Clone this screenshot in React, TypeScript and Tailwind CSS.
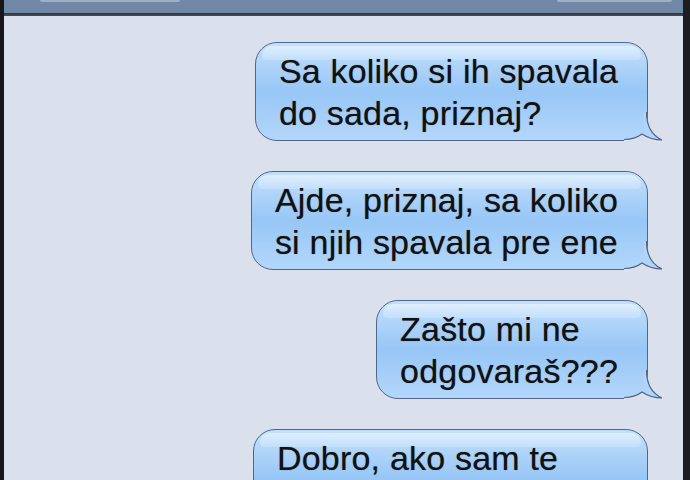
const messages: { lines: string[]; wide?: boolean }[] = [
  { lines: ["Sa koliko si ih spavala", "do sada, priznaj?"] },
  { lines: ["Ajde, priznaj, sa koliko", "si njih spavala pre ene"] },
  { lines: ["Zašto mi ne", "odgovaraš???"] },
  { lines: ["Dobro, ako sam te", "uvredio, izvini"], wide: true },
];

// bubble tail, drawn over the square bottom-right corner of the bubble
function Tail() {
  return (
    <svg
      className="absolute right-[-17px] bottom-[-2px]"
      width="40"
      height="32"
      viewBox="0 0 40 32"
    >
      <path
        d="M38 30 C30 30 24 28 18 24 C14 27 8 29.5 0 29.5 L0 32 L40 32 L40 30 Z"
        fill="#dbe1ec"
      />
      <path
        d="M20 2 L23 2 C23 16 27 25 38 30 C30 30 24 28 18 24 L20 24 Z"
        fill="#b1d5fa"
      />
      <path
        d="M22.5 2 C22.5 16 27 25 38 30 C30 30 24 28 18 24 C14 27 8 29.5 0 29.5"
        fill="none"
        stroke="#4f6384"
        strokeWidth="1.2"
      />
    </svg>
  );
}

function Bubble({ lines, wide }: { lines: string[]; wide?: boolean }) {
  return (
    <div
      className={`relative shrink-0 rounded-[22px] rounded-br-none border border-[#52668a] bg-gradient-to-b from-[#c4e0fc] via-[#97c6f6] to-[#b4d7fb] pl-[23px] pr-[29px] pt-[7px] pb-[6px] ${
        wide ? "w-[395px]" : ""
      }`}
    >
      <div className="absolute left-[6px] right-[6px] top-[3px] h-[14px] rounded-t-[18px] rounded-b-[8px] bg-gradient-to-b from-[#e6f2fe] to-[#c6e1fb] opacity-80" />
      <Tail />
      <div className="relative whitespace-nowrap text-[34px] leading-[42px] tracking-[0.2px] text-[#111] [text-shadow:0_0_1px_rgba(0,0,0,0.45)]">
        {lines.map((line) => (
          <div key={line}>{line}</div>
        ))}
      </div>
    </div>
  );
}

export default function App() {
  return (
    <div
      className="flex h-[480px] w-[690px] overflow-hidden bg-[#15171b]"
      style={{ fontFamily: '"Liberation Sans", Arial, sans-serif' }}
    >
      <div className="w-[4px] shrink-0 bg-[#15171b]" />
      <div className="flex min-w-0 flex-1 flex-col">
        <div className="flex h-[13px] shrink-0 justify-between bg-[#7088a5] pl-[36px] pr-[11px]">
          <div className="h-[2px] w-[140px] rounded-b-[3px] bg-[#9fb0c6]" />
          <div className="h-[2px] w-[115px] rounded-b-[3px] bg-[#9fb0c6]" />
        </div>
        <div className="h-[3px] shrink-0 bg-gradient-to-b from-[#2f343b] to-[#474d57]" />
        <div className="flex flex-1 flex-col items-end gap-[30px] bg-[#dbe1ec] pr-[35px] pt-[26px]">
          {messages.map((m) => (
            <Bubble key={m.lines[0]} lines={m.lines} wide={m.wide} />
          ))}
        </div>
      </div>
      <div className="w-[7px] shrink-0 bg-[#1b1d21]" />
    </div>
  );
}
